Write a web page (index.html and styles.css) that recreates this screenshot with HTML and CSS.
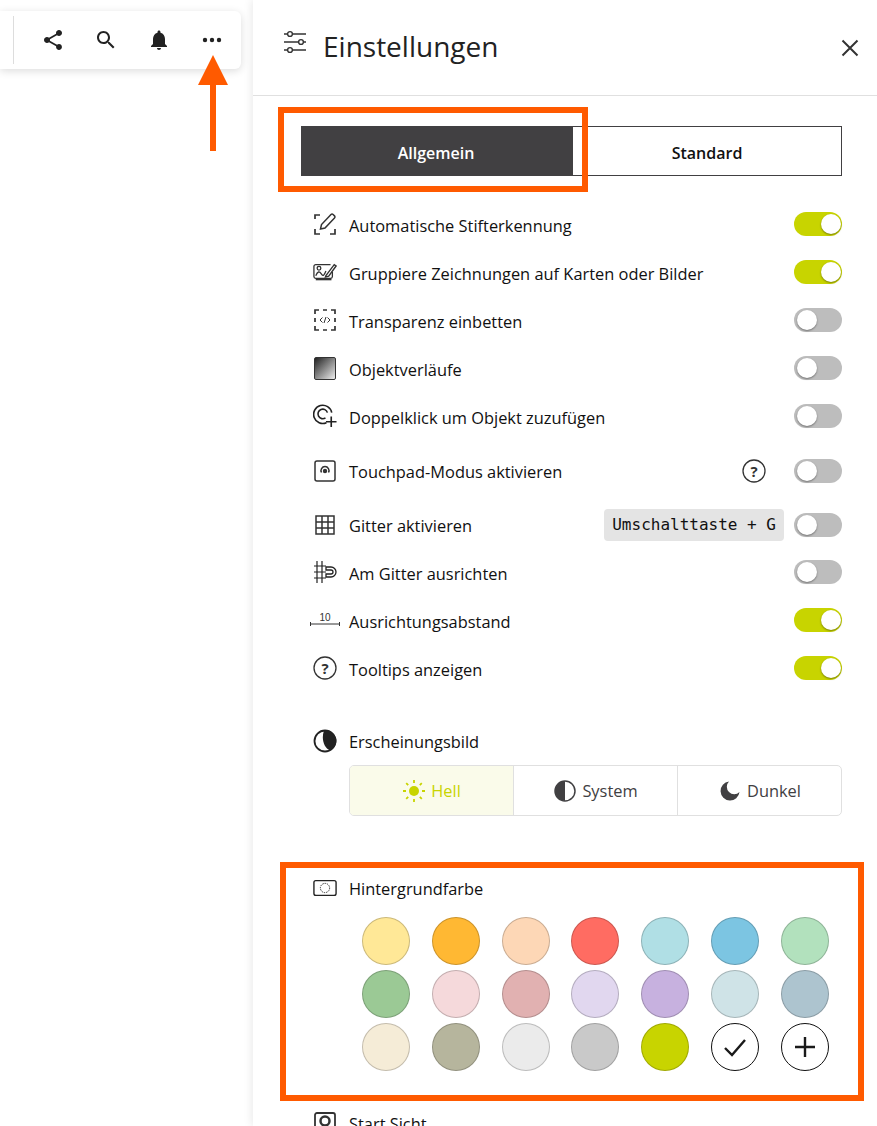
FILE: index.html
```html
<!DOCTYPE html>
<html lang="de">
<head>
    <meta charset="UTF-8">
    <meta name="viewport" content="width=device-width, initial-scale=1.0">
    <title>Einstellungen</title>
    <link rel="stylesheet" href="styles.css">
</head>
<body>
    <div class="canvas">
        <div class="toolbar">
            <span class="toolbar-divider"></span>
            <button class="tool-btn"><svg viewBox="0 0 24 24" width="24" height="24"><path d="M18 16.08c-.76 0-1.44.3-1.96.77L8.91 12.7c.05-.23.09-.46.09-.7s-.04-.47-.09-.7l7.05-4.11c.54.5 1.25.81 2.04.81 1.66 0 3-1.34 3-3s-1.34-3-3-3-3 1.34-3 3c0 .24.04.47.09.7L8.04 9.81C7.5 9.31 6.79 9 6 9c-1.66 0-3 1.34-3 3s1.34 3 3 3c.79 0 1.5-.31 2.04-.81l7.12 4.16c-.05.21-.08.43-.08.65 0 1.61 1.31 2.92 2.92 2.92s2.92-1.31 2.92-2.92-1.31-2.92-2.92-2.92z"/></svg></button>
            <button class="tool-btn"><svg viewBox="0 0 24 24" width="24" height="24"><path d="M15.5 14h-.79l-.28-.27C15.41 12.59 16 11.11 16 9.5 16 5.91 13.09 3 9.5 3S3 5.91 3 9.5 5.91 16 9.5 16c1.61 0 3.09-.59 4.23-1.57l.27.28v.79l5 4.99L20.49 19l-4.99-5zm-6 0C7.01 14 5 11.99 5 9.5S7.01 5 9.5 5 14 7.01 14 9.5 11.99 14 9.5 14z"/></svg></button>
            <button class="tool-btn"><svg viewBox="0 0 24 24" width="24" height="24"><path d="M12 22c1.1 0 2-.9 2-2h-4c0 1.1.89 2 2 2zm6-6v-5c0-3.07-1.64-5.64-4.5-6.32V4c0-.83-.67-1.5-1.5-1.5s-1.5.67-1.5 1.5v.68C7.63 5.36 6 7.92 6 11v5l-2 2v1h16v-1l-2-2z"/></svg></button>
            <button class="tool-btn"><svg viewBox="0 0 24 24" width="24" height="24"><circle cx="5" cy="12" r="2.2"/><circle cx="12" cy="12" r="2.2"/><circle cx="19" cy="12" r="2.2"/></svg></button>
        </div>
    </div>

    <aside class="panel">
        <header class="panel-header">
            <svg class="header-icon" viewBox="0 0 24 24" width="24" height="24" fill="none" stroke="#333" stroke-width="1.4">
                <path d="M1 4h3M10 4h13M1 12h14M21 12h2M1 20h3M10 20h13"/>
                <circle cx="7" cy="4" r="2.4"/><circle cx="18" cy="12" r="2.4"/><circle cx="7" cy="20" r="2.4"/>
            </svg>
            <h1 class="panel-title">Einstellungen</h1>
            <svg class="close-icon" viewBox="0 0 18 18" width="18" height="18" fill="none" stroke="#333" stroke-width="2"><path d="M1.5 1.5l15 15M16.5 1.5l-15 15"/></svg>
        </header>

        <div class="tabs">
            <div class="tab tab-active">Allgemein</div>
            <div class="tab">Standard</div>
        </div>

        <div class="settings">
            <div class="setting">
                <svg class="row-icon" viewBox="0 0 24 24" fill="none" stroke="#333" stroke-width="1.700"><path d="M2 7V3h5M2 17v5h5M17 22h5v-5"/><path stroke-width="1.500" d="M7.500 17l1-4.500L18 2.500c.6-.6 1.500-.6 2.100 0l1.400 1.400c.6.6.6 1.500 0 2.100L12 16z"/></svg>
                <span class="setting-label">Automatische Stifterkennung</span>
                <span class="toggle on"></span>
            </div>
            <div class="setting">
                <svg class="row-icon" viewBox="0 0 26 24" fill="none" stroke="#333" stroke-width="1.400"><path d="M19 4H3a2 2 0 0 0-2 2v11a2 2 0 0 0 2 2h16a2 2 0 0 0 2-2v-5" /><path stroke-width="2" d="M3 20h17"/><circle cx="6.500" cy="8" r="2"/><path d="M3 16c2-5 4-5 6-2s3 2 5-3"/><path d="M14 16l9-12 2 1.500-8 11-3.500 1z" stroke-width="1.500"/></svg>
                <span class="setting-label">Gruppiere Zeichnungen auf Karten oder Bilder</span>
                <span class="toggle on"></span>
            </div>
            <div class="setting">
                <svg class="row-icon" viewBox="0 0 24 24" fill="none" stroke="#333" stroke-width="1.700"><path d="M2 6V2h4M10 2h4M18 2h4v4M2 10v4M22 10v4M2 18v4h4M10 22h4M18 22h4v-4"/><path stroke-width="1" d="M9.500 9.500L7 12l2.500 2.500M14.500 9.500L17 12l-2.500 2.500M13 9l-2 6"/></svg>
                <span class="setting-label">Transparenz einbetten</span>
                <span class="toggle"></span>
            </div>
            <div class="setting">
                <span class="gradient-icon"></span>
                <span class="setting-label">Objektverläufe</span>
                <span class="toggle"></span>
            </div>
            <div class="setting">
                <svg class="row-icon" viewBox="0 0 25 25" fill="none" stroke="#222" stroke-width="1.700"><path d="M14 19.500A9.500 9.500 0 1 1 19.500 9"/><path d="M13 14.500A5 5 0 1 1 15 9"/><path d="M19 13v11M13.500 18.500h11"/></svg>
                <span class="setting-label">Doppelklick um Objekt zuzufügen</span>
                <span class="toggle"></span>
            </div>
            <div class="setting setting-tall">
                <svg class="row-icon" viewBox="0 0 24 24" fill="none" stroke="#333" stroke-width="1.500"><rect x="2" y="2" width="20" height="20" rx="2"/><circle cx="12" cy="12" r="2.200" fill="#333" stroke="none"/><path d="M8.500 13.500a4 4 0 1 1 7 0"/></svg>
                <span class="setting-label">Touchpad-Modus aktivieren</span>
                <svg class="help-icon" viewBox="0 0 24 24" width="24" height="24"><circle cx="12" cy="12" r="11" fill="none" stroke="#333" stroke-width="1.300"/><text x="12" y="17.500" text-anchor="middle" class="help-mark">?</text></svg>
                <span class="toggle"></span>
            </div>
            <div class="setting setting-grid">
                <svg class="row-icon" viewBox="0 0 24 24" fill="none" stroke="#333" stroke-width="1.500"><path d="M3 3h18v18H3zM3 9h18M3 15h18M9 3v18M15 3v18"/></svg>
                <span class="setting-label">Gitter aktivieren</span>
                <kbd class="shortcut">Umschalttaste + G</kbd>
                <span class="toggle"></span>
            </div>
            <div class="setting">
                <svg class="row-icon" viewBox="0 0 24 24" fill="none" stroke="#222" stroke-width="1.200"><path d="M4 1v22M9 1v22M1 6h12M1 12h12M1 18h12"/><path stroke-width="1.300" d="M13 7h5a5 5 0 0 1 0 10h-5v-3h5a2 2 0 0 0 0-4h-5z"/></svg>
                <span class="setting-label">Am Gitter ausrichten</span>
                <span class="toggle"></span>
            </div>
            <div class="setting">
                <svg class="row-icon row-icon-wide" viewBox="0 0 30 24" fill="none" stroke="#333"><path d="M.5 14v4M.5 16h29M29.500 14v4"/><text x="15" y="13" text-anchor="middle" class="ruler-mark">10</text></svg>
                <span class="setting-label">Ausrichtungsabstand</span>
                <span class="toggle on"></span>
            </div>
            <div class="setting">
                <svg class="row-icon" viewBox="0 0 24 24"><circle cx="12" cy="12" r="11" fill="none" stroke="#333" stroke-width="1.300"/><text x="12" y="17.500" text-anchor="middle" class="help-mark">?</text></svg>
                <span class="setting-label">Tooltips anzeigen</span>
                <span class="toggle on"></span>
            </div>
        </div>

        <section class="appearance">
            <div class="section-title">
                <svg class="row-icon" viewBox="0 0 24 24"><circle cx="12" cy="12" r="10.500" fill="#fff" stroke="#222" stroke-width="1.800"/><path d="M11 1.500A10.500 10.500 0 0 1 17 21.500C11 19 8 10 11 1.500z" fill="#222"/></svg>
                <span>Erscheinungsbild</span>
            </div>
            <div class="segments">
                <div class="segment segment-active">
                    <svg viewBox="0 0 24 24" width="24" height="24" fill="#c8d400" stroke="#c8d400"><circle cx="12" cy="12" r="5" stroke="none"/><path stroke-width="1.800" d="M12 1v3M12 20v3M1 12h3M20 12h3M4.200 4.200l2 2M17.800 17.800l2 2M4.200 19.800l2-2M17.800 6.200l2-2"/></svg>
                    <span>Hell</span>
                </div>
                <div class="segment">
                    <svg viewBox="0 0 24 24" width="24" height="24"><circle cx="12" cy="12" r="10" fill="#fff" stroke="#414042" stroke-width="1.500"/><path d="M12 2a10 10 0 0 0 0 20z" fill="#414042"/></svg>
                    <span>System</span>
                </div>
                <div class="segment">
                    <svg viewBox="0 0 24 24" width="24" height="24"><path d="M11 2.500A9.500 9.500 0 1 0 21.500 13A6.500 6.500 0 0 1 11 2.500z" fill="#414042"/></svg>
                    <span>Dunkel</span>
                </div>
            </div>
        </section>

        <section class="background">
            <div class="section-title">
                <svg class="row-icon" viewBox="0 0 26 18" fill="none" stroke="#222"><rect x="1" y="1" width="24" height="16" rx="2" stroke-width="1.500"/><circle cx="13" cy="9" r="5" stroke-width="1" stroke-dasharray="1.500 1"/></svg>
                <span>Hintergrundfarbe</span>
            </div>
            <div class="swatches">
                <span class="swatch swatch-yellow"></span>
                <span class="swatch swatch-orange"></span>
                <span class="swatch swatch-peach"></span>
                <span class="swatch swatch-red"></span>
                <span class="swatch swatch-aqua"></span>
                <span class="swatch swatch-blue"></span>
                <span class="swatch swatch-mint"></span>
                <span class="swatch swatch-green"></span>
                <span class="swatch swatch-pink"></span>
                <span class="swatch swatch-rose"></span>
                <span class="swatch swatch-lilac"></span>
                <span class="swatch swatch-purple"></span>
                <span class="swatch swatch-ice"></span>
                <span class="swatch swatch-steel"></span>
                <span class="swatch swatch-cream"></span>
                <span class="swatch swatch-olive"></span>
                <span class="swatch swatch-lightgrey"></span>
                <span class="swatch swatch-grey"></span>
                <span class="swatch swatch-lime"></span>
                <span class="swatch swatch-outline"><svg viewBox="0 0 24 24" width="24" height="24" fill="none" stroke="#1a1a1a" stroke-width="2.400"><path d="M2 13l7 7L22 5"/></svg></span>
                <span class="swatch swatch-outline"><svg viewBox="0 0 24 24" width="24" height="24" fill="none" stroke="#1a1a1a" stroke-width="2.400"><path d="M12 2v20M2 12h20"/></svg></span>
            </div>
        </section>

        <div class="section-title start-view">
            <svg class="row-icon" viewBox="0 0 24 24" fill="none" stroke="#333" stroke-width="1.800"><rect x="2" y="2" width="20" height="20" rx="2"/><circle cx="12" cy="10" r="4.500" stroke-width="2.500"/></svg>
            <span>Start Sicht</span>
        </div>
    </aside>

    <!-- annotations drawn on top of the screenshot -->
    <span class="mark mark-tab"></span>
    <span class="mark mark-colors"></span>
    <svg class="mark-arrow" viewBox="0 0 32 98" width="32" height="98"><path d="M16 0l15 30h-12v66h-6V30H1z" fill="#ff5a00"/></svg>
</body>
</html>
```

FILE: styles.css
```css
html, body {
    height: 100%;
}
body {
    font-family: 'Open Sans', 'Noto Sans', sans-serif;
    margin: 0;
    background-color: #fff;
    color: #111;
    display: flex;
    height: 1126px;
    overflow: hidden;
    position: relative;
}
.canvas {
    width: 253px;
    flex-shrink: 0;
}
.toolbar {
    width: 241px;
    height: 58px;
    margin-top: 11px;
    background-color: #fff;
    border-radius: 0 6px 6px 0;
    box-shadow: 0 2px 8px rgba(0, 0, 0, 0.14);
    display: flex;
    align-items: center;
    padding-left: 13px;
    box-sizing: border-box;
}
.toolbar-divider {
    width: 1px;
    height: 48px;
    background-color: #ddd;
    margin-right: 12px;
}
.tool-btn {
    width: 53px;
    height: 48px;
    padding: 0;
    border: none;
    background: none;
    display: flex;
    align-items: center;
    justify-content: center;
    fill: #222;
}
.panel {
    flex: 1;
    box-shadow: -2px 0 8px rgba(0, 0, 0, 0.08);
    min-width: 0;
}
.panel-header {
    height: 95px;
    border-bottom: 1px solid #e0e0e0;
    display: flex;
    align-items: center;
    padding: 0 18px 0 30px;
}
.header-icon {
    margin: 0 16px 12px 0;
}
.panel-title {
    font-size: 28px;
    font-weight: 400;
    margin: 0 0 3px;
    flex: 1;
    color: #222;
}
.close-icon {
    flex-shrink: 0;
}
.tabs {
    display: flex;
    margin: 30px 35px 0 48px;
    height: 50px;
    border: 1px solid #414042;
    box-sizing: border-box;
}
.tab {
    flex: 1;
    display: flex;
    align-items: center;
    justify-content: center;
    font-size: 16px;
    font-weight: 600;
    color: #111;
    padding-top: 3px;
}
.tab-active {
    flex: 0 0 271px;
    background-color: #414042;
    color: #fff;
    padding-right: 3px;
    box-sizing: border-box;
}
.settings {
    margin: 24px 35px 0 60px;
}
.setting {
    display: flex;
    align-items: center;
    height: 48px;
}
.setting-tall {
    height: 62px;
}
.setting-grid {
    height: 46px;
}
.row-icon {
    width: 24px;
    height: 24px;
    margin-right: 12px;
    flex-shrink: 0;
}
.row-icon-wide {
    width: 30px;
    margin: 0 9px 0 -3px;
}
.gradient-icon {
    width: 20px;
    height: 21px;
    margin: 0 13px 0 1px;
    border: 1px solid #333;
    border-radius: 2px;
    background: linear-gradient(135deg, #222, #eee);
    flex-shrink: 0;
}
.setting-label {
    font-size: 16.4px;
    flex: 1;
    white-space: nowrap;
    padding-top: 2px;
}
.setting-tall .setting-label,
.setting-grid .setting-label {
    padding-top: 0;
}
.help-icon {
    margin-right: 28px;
}
.help-mark {
    font-family: 'Open Sans', sans-serif;
    font-size: 15px;
    font-weight: 700;
    fill: #333;
}
.ruler-mark {
    font-family: 'Liberation Sans', sans-serif;
    font-size: 10px;
    fill: #333;
    stroke: none;
}
.shortcut {
    font-family: 'DejaVu Sans Mono', 'Liberation Mono', monospace;
    font-size: 16px;
    background-color: #e4e4e4;
    border-radius: 4px;
    padding: 7px 8px;
    margin-right: 10px;
    line-height: 18px;
}
.toggle {
    width: 48px;
    height: 24px;
    border-radius: 12px;
    background-color: #bdbdbd;
    position: relative;
    flex-shrink: 0;
}
.toggle::after {
    content: "";
    position: absolute;
    top: 2px;
    left: 3px;
    width: 20px;
    height: 20px;
    border-radius: 50%;
    background-color: #fff;
    box-shadow: 0 1px 2px rgba(0, 0, 0, 0.4);
}
.toggle.on {
    background-color: #c8d400;
}
.toggle.on::after {
    left: 27px;
}
.section-title {
    display: flex;
    align-items: center;
    font-size: 16.4px;
    height: 24px;
    margin-left: 60px;
    color: #111;
}
.appearance {
    margin: 37px 35px 0 0;
}
.segments {
    display: flex;
    margin: 12px 0 0 96px;
    height: 51px;
    border: 1px solid #e0e0e0;
    border-radius: 5px;
    box-sizing: border-box;
    overflow: hidden;
}
.segment {
    flex: 1;
    display: flex;
    align-items: center;
    justify-content: center;
    gap: 5px;
    font-size: 16.4px;
    color: #414042;
    border-left: 1px solid #e0e0e0;
}
.segment:first-child {
    border-left: none;
}
.segment-active {
    background-color: #fafbea;
    color: #c8d400;
}
.background {
    margin-top: 60px;
}
.swatches {
    display: grid;
    grid-template-columns: repeat(7, 48px);
    column-gap: 21.8px;
    row-gap: 5px;
    margin: 17px 0 0 109px;
}
.swatch {
    width: 48px;
    height: 48px;
    border-radius: 50%;
    box-sizing: border-box;
    border: 1px solid rgba(0, 0, 0, 0.2);
    display: flex;
    align-items: center;
    justify-content: center;
}
.swatch-yellow { background-color: #ffe897; }
.swatch-orange { background-color: #ffb833; }
.swatch-peach { background-color: #fdd7b6; }
.swatch-red { background-color: #ff6c62; }
.swatch-aqua { background-color: #b0dfe5; }
.swatch-blue { background-color: #7cc5e2; }
.swatch-mint { background-color: #b2e1bd; }
.swatch-green { background-color: #9bc995; }
.swatch-pink { background-color: #f5d9db; }
.swatch-rose { background-color: #e1b1b1; }
.swatch-lilac { background-color: #e1d7ef; }
.swatch-purple { background-color: #c7b1df; }
.swatch-ice { background-color: #cfe3e7; }
.swatch-steel { background-color: #adc4cf; }
.swatch-cream { background-color: #f5ecd7; }
.swatch-olive { background-color: #b6b59d; }
.swatch-lightgrey { background-color: #ebebeb; }
.swatch-grey { background-color: #c9c9c9; }
.swatch-lime { background-color: #c8d400; }
.swatch-outline {
    background-color: #fff;
    border-color: #111;
}
.start-view {
    margin-top: 40px;
}
.mark {
    position: absolute;
    border: 6px solid #ff5a00;
    box-sizing: border-box;
}
.mark-tab {
    left: 278px;
    top: 107px;
    width: 310px;
    height: 85px;
}
.mark-colors {
    left: 280px;
    top: 862px;
    width: 584px;
    height: 239px;
}
.mark-arrow {
    position: absolute;
    left: 197px;
    top: 55px;
}
```
